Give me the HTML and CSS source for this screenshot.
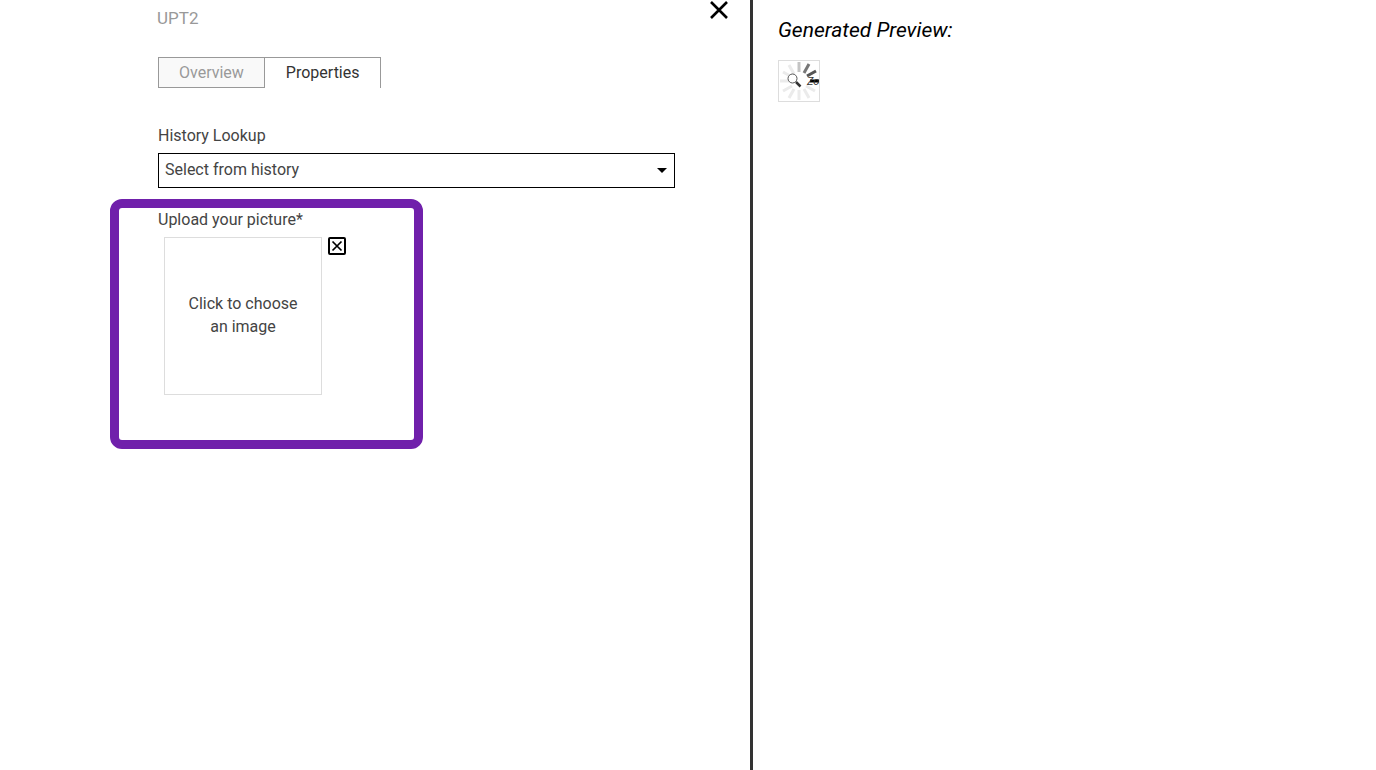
FILE: index.html
```html
<!DOCTYPE html>
<html lang="en">
<head>
    <meta charset="utf-8">
    <title>UPT2</title>
    <link rel="stylesheet" href="styles.css">
</head>
<body>
    <main class="editor">
        <div class="editor-head">
            <h1 class="title">UPT2</h1>
            <button class="close" type="button" aria-label="Close">
                <svg width="20" height="20" viewBox="0 0 20 20"><path d="M2 2l16 16M18 2l-16 16" stroke="#000" stroke-width="2.6" fill="none"/></svg>
            </button>
        </div>
        <div class="tabs">
            <button class="tab" type="button">Overview</button>
            <button class="tab active" type="button">Properties</button>
        </div>
        <div class="field">
            <label for="history">History Lookup</label>
            <div class="select-wrap">
                <select id="history">
                    <option>Select from history</option>
                </select>
                <svg class="arrow" width="10" height="5" viewBox="0 0 10 5"><path d="M0 0h10l-5 5z" fill="#000"/></svg>
            </div>
        </div>
        <div class="upload">
            <label for="picture">Upload your picture*</label>
            <div class="upload-row">
                <button class="picker" id="picture" type="button">Click to choose an image</button>
                <button class="clear" type="button" aria-label="Remove image">
                    <svg width="18" height="18" viewBox="0 0 18 18"><rect x="1" y="1" width="16" height="16" rx="1" fill="none" stroke="#000" stroke-width="2"/><path d="M4.500 4.500l9 9M13.500 4.500l-9 9" stroke="#000" stroke-width="1.700" fill="none"/></svg>
                </button>
            </div>
        </div>
    </main>
    <aside class="preview">
        <h2 class="preview-title">Generated Preview:</h2>
        <div class="thumb">
            <svg width="40" height="40" viewBox="0 0 40 40" fill="none">
                <g stroke-width="3">
                    <path d="M20 1v10" stroke="#c4c4c4"/>
                    <path d="M30 3l-5 9" stroke="#777"/>
                    <path d="M37 10l-9 5" stroke="#555"/>
                    <path d="M36 30l-9-5M30 37l-5-9M20 39v-10M10 37l5-9M4 30l9-5M1 20h9M4 11l9 5M10 4l5 9" stroke="#ebebeb"/>
                    <path d="M31 20h9" stroke="#000"/>
                </g>
                <circle cx="13.500" cy="17.500" r="4.500" fill="#fff" stroke="#555"/>
                <path d="M17 21l4.500 4.500" stroke="#333" stroke-width="2.500"/>
                <text class="zoom" x="28" y="24">Zo</text>
            </svg>
        </div>
    </aside>
</body>
</html>
```

FILE: styles.css
```css
* {
    box-sizing: border-box;
}
body {
    margin: 0;
    min-height: 100vh;
    display: grid;
    grid-template-columns: 753fr 623fr;
    font-family: Roboto, sans-serif;
    font-size: 16px;
    line-height: 23px;
    color: #444;
    background-color: #fff;
}
button, select {
    font: inherit;
    color: inherit;
    border: none;
    background: none;
    padding: 0;
    cursor: pointer;
}
svg {
    display: block;
}
label {
    display: block;
    margin-bottom: 6px;
}
.editor {
    border-right: 3px solid #333;
    padding: 0 75px 0 110px;
}
.editor-head {
    display: flex;
    justify-content: space-between;
    align-items: flex-start;
    margin-right: -54px;
    padding-left: 47px;
}
.title {
    margin: 7px 0 27px;
    font-size: 17px;
    font-weight: normal;
    color: #999;
}
.tabs {
    display: flex;
    padding-left: 48px;
    margin-bottom: 36px;
}
.tab {
    height: 31px;
    padding: 0 20px;
    border: 1px solid #999;
    color: #999;
    background-color: #f9f9f9;
}
.tab.active {
    padding: 0 20px 1px 21px;
    border-left: none;
    border-bottom: none;
    color: #333;
    background-color: #fff;
}
.field {
    padding-left: 48px;
    margin-bottom: 11px;
}
.select-wrap {
    position: relative;
}
.arrow {
    position: absolute;
    right: 8px;
    top: 15px;
    pointer-events: none;
}
select {
    display: block;
    width: 100%;
    height: 35px;
    padding: 0 24px 2px 6px;
    border: 1px solid #000;
    border-radius: 0;
    appearance: none;
}
.upload {
    width: 313px;
    height: 250px;
    padding: 0 39px;
    border: 9px solid #7020ab;
    border-radius: 12px;
}
.upload-row {
    display: flex;
    align-items: flex-start;
    gap: 6px;
    padding-left: 6px;
}
.picker {
    width: 158px;
    height: 158px;
    padding: 0 20px 2px;
    border: 1px solid #ddd;
}
.preview {
    padding: 19px 25px;
}
.preview-title {
    margin: 0 0 18px;
    font-size: 21px;
    font-style: italic;
    font-weight: normal;
    color: #000;
}
.thumb {
    width: 42px;
    height: 42px;
    border: 1px solid #ddd;
    overflow: hidden;
}
.zoom {
    font-size: 11px;
    font-style: italic;
    fill: #333;
}
```
